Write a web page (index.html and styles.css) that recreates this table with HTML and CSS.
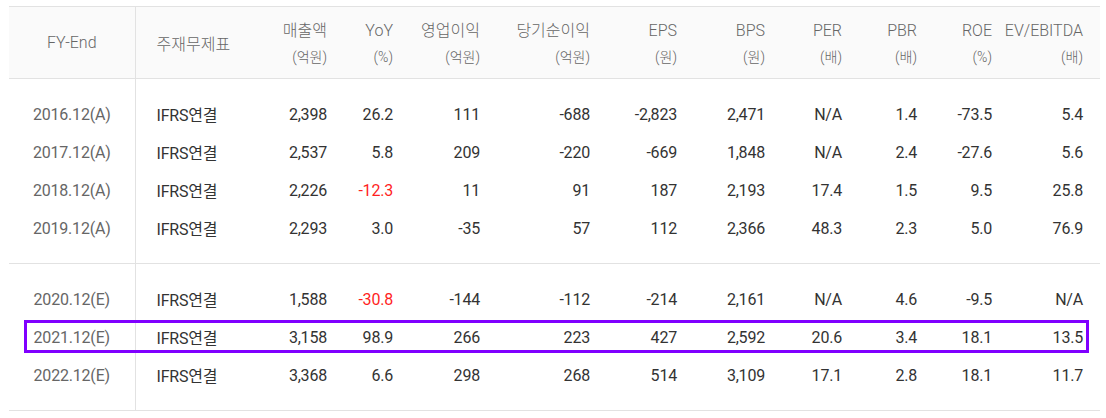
FILE: index.html
```html
<!DOCTYPE html>
<html lang="ko">
<head>
<meta charset="utf-8">
<link rel="stylesheet" href="styles.css">
</head>
<body>
<div class="wrap">
  <table class="fin">
    <colgroup>
      <col class="c1"><col class="c2"><col class="c3"><col class="c4"><col class="c5"><col class="c6">
      <col class="c7"><col class="c8"><col class="c9"><col class="c10"><col class="c11"><col class="c12">
    </colgroup>
    <thead>
      <tr>
        <th class="fy">FY-End</th>
        <th class="rep">주재무제표</th>
        <th><span class="l1">매출액</span><span class="l2">(억원)</span></th>
        <th><span class="l1">YoY</span><span class="l2">(%)</span></th>
        <th><span class="l1">영업이익</span><span class="l2">(억원)</span></th>
        <th><span class="l1">당기순이익</span><span class="l2">(억원)</span></th>
        <th><span class="l1">EPS</span><span class="l2">(원)</span></th>
        <th><span class="l1">BPS</span><span class="l2">(원)</span></th>
        <th><span class="l1">PER</span><span class="l2">(배)</span></th>
        <th><span class="l1">PBR</span><span class="l2">(배)</span></th>
        <th><span class="l1">ROE</span><span class="l2">(%)</span></th>
        <th class="last"><span class="l1">EV/EBITDA</span><span class="l2">(배)</span></th>
      </tr>
    </thead>
    <tbody>
      <tr class="first">
        <td class="fy">2016.12(A)</td><td class="rep">IFRS연결</td>
        <td>2,398</td><td>26.2</td><td>111</td><td>-688</td><td>-2,823</td><td>2,471</td><td>N/A</td><td>1.4</td><td>-73.5</td><td class="last">5.4</td>
      </tr>
      <tr>
        <td class="fy">2017.12(A)</td><td class="rep">IFRS연결</td>
        <td>2,537</td><td>5.8</td><td>209</td><td>-220</td><td>-669</td><td>1,848</td><td>N/A</td><td>2.4</td><td>-27.6</td><td class="last">5.6</td>
      </tr>
      <tr>
        <td class="fy">2018.12(A)</td><td class="rep">IFRS연결</td>
        <td>2,226</td><td class="neg">-12.3</td><td>11</td><td>91</td><td>187</td><td>2,193</td><td>17.4</td><td>1.5</td><td>9.5</td><td class="last">25.8</td>
      </tr>
      <tr class="end">
        <td class="fy">2019.12(A)</td><td class="rep">IFRS연결</td>
        <td>2,293</td><td>3.0</td><td>-35</td><td>57</td><td>112</td><td>2,366</td><td>48.3</td><td>2.3</td><td>5.0</td><td class="last">76.9</td>
      </tr>
    </tbody>
    <tbody class="est">
      <tr class="first">
        <td class="fy">2020.12(E)</td><td class="rep">IFRS연결</td>
        <td>1,588</td><td class="neg">-30.8</td><td>-144</td><td>-112</td><td>-214</td><td>2,161</td><td>N/A</td><td>4.6</td><td>-9.5</td><td class="last">N/A</td>
      </tr>
      <tr>
        <td class="fy">2021.12(E)</td><td class="rep">IFRS연결</td>
        <td>3,158</td><td>98.9</td><td>266</td><td>223</td><td>427</td><td>2,592</td><td>20.6</td><td>3.4</td><td>18.1</td><td class="last">13.5</td>
      </tr>
      <tr class="end">
        <td class="fy">2022.12(E)</td><td class="rep">IFRS연결</td>
        <td>3,368</td><td>6.6</td><td>298</td><td>268</td><td>514</td><td>3,109</td><td>17.1</td><td>2.8</td><td>18.1</td><td class="last">11.7</td>
      </tr>
    </tbody>
  </table>
  <div class="highlight"></div>
</div>
</body>
</html>
```

FILE: styles.css
```css
html, body {
  margin: 0;
  padding: 0;
  background: #fff;
}
body {
  font-family: Roboto, "Noto Sans CJK KR", sans-serif;
}
.wrap {
  position: relative;
  padding: 6px 0 0 9px;
}
.fin {
  border-collapse: collapse;
  table-layout: fixed;
  width: 1091px;
  border-top: 1px solid #e2e2e2;
  border-bottom: 1px solid #e2e2e2;
}
.c1 { width: 126px; }
.c2 { width: 105px; }
.c3 { width: 97px; }
.c4 { width: 66px; }
.c5 { width: 87px; }
.c6 { width: 110px; }
.c7 { width: 87px; }
.c8 { width: 88px; }
.c9 { width: 77px; }
.c10 { width: 75px; }
.c11 { width: 75px; }
.c12 { width: 98px; }

.fin thead th {
  background: #fafafa;
  height: 72px;
  box-sizing: border-box;
  padding: 3px 10px 0 0;
  font-weight: 300;
  color: #666;
  text-align: right;
  vertical-align: middle;
  border-bottom: 1px solid #e2e2e2;
  white-space: nowrap;
}
.fin th .l1 {
  display: block;
  font-size: 16px;
  line-height: 27px;
}
.fin th .l2 {
  display: block;
  font-size: 14px;
  line-height: 27px;
}
.fin th.fy {
  text-align: center;
  padding: 0;
  font-size: 16px;
  border-right: 1px solid #e2e2e2;
}
.fin th.rep {
  text-align: left;
  padding: 0 0 0 21px;
  font-size: 16px;
}
.fin th.last,
.fin td.last {
  padding-right: 17px;
}

.fin td {
  height: 38px;
  padding: 0 10px 0 0;
  font-size: 16px;
  color: #333;
  text-align: right;
  vertical-align: middle;
  white-space: nowrap;
  letter-spacing: -0.2px;
}
.fin td.fy {
  text-align: center;
  padding: 0;
  color: #666;
  border-right: 1px solid #e2e2e2;
}
.fin td.rep {
  text-align: left;
  padding-left: 21px;
}
.fin td.neg {
  color: #ff1f1f;
}
.fin tr.first td {
  padding-top: 16px;
}
.fin tr.end td {
  padding-bottom: 16px;
}
.fin tbody.est {
  border-top: 1px solid #e2e2e2;
}

.highlight {
  position: absolute;
  left: 24px;
  top: 320px;
  width: 1065px;
  height: 33px;
  box-sizing: border-box;
  border: 3px solid #8000ff;
  pointer-events: none;
}
```
